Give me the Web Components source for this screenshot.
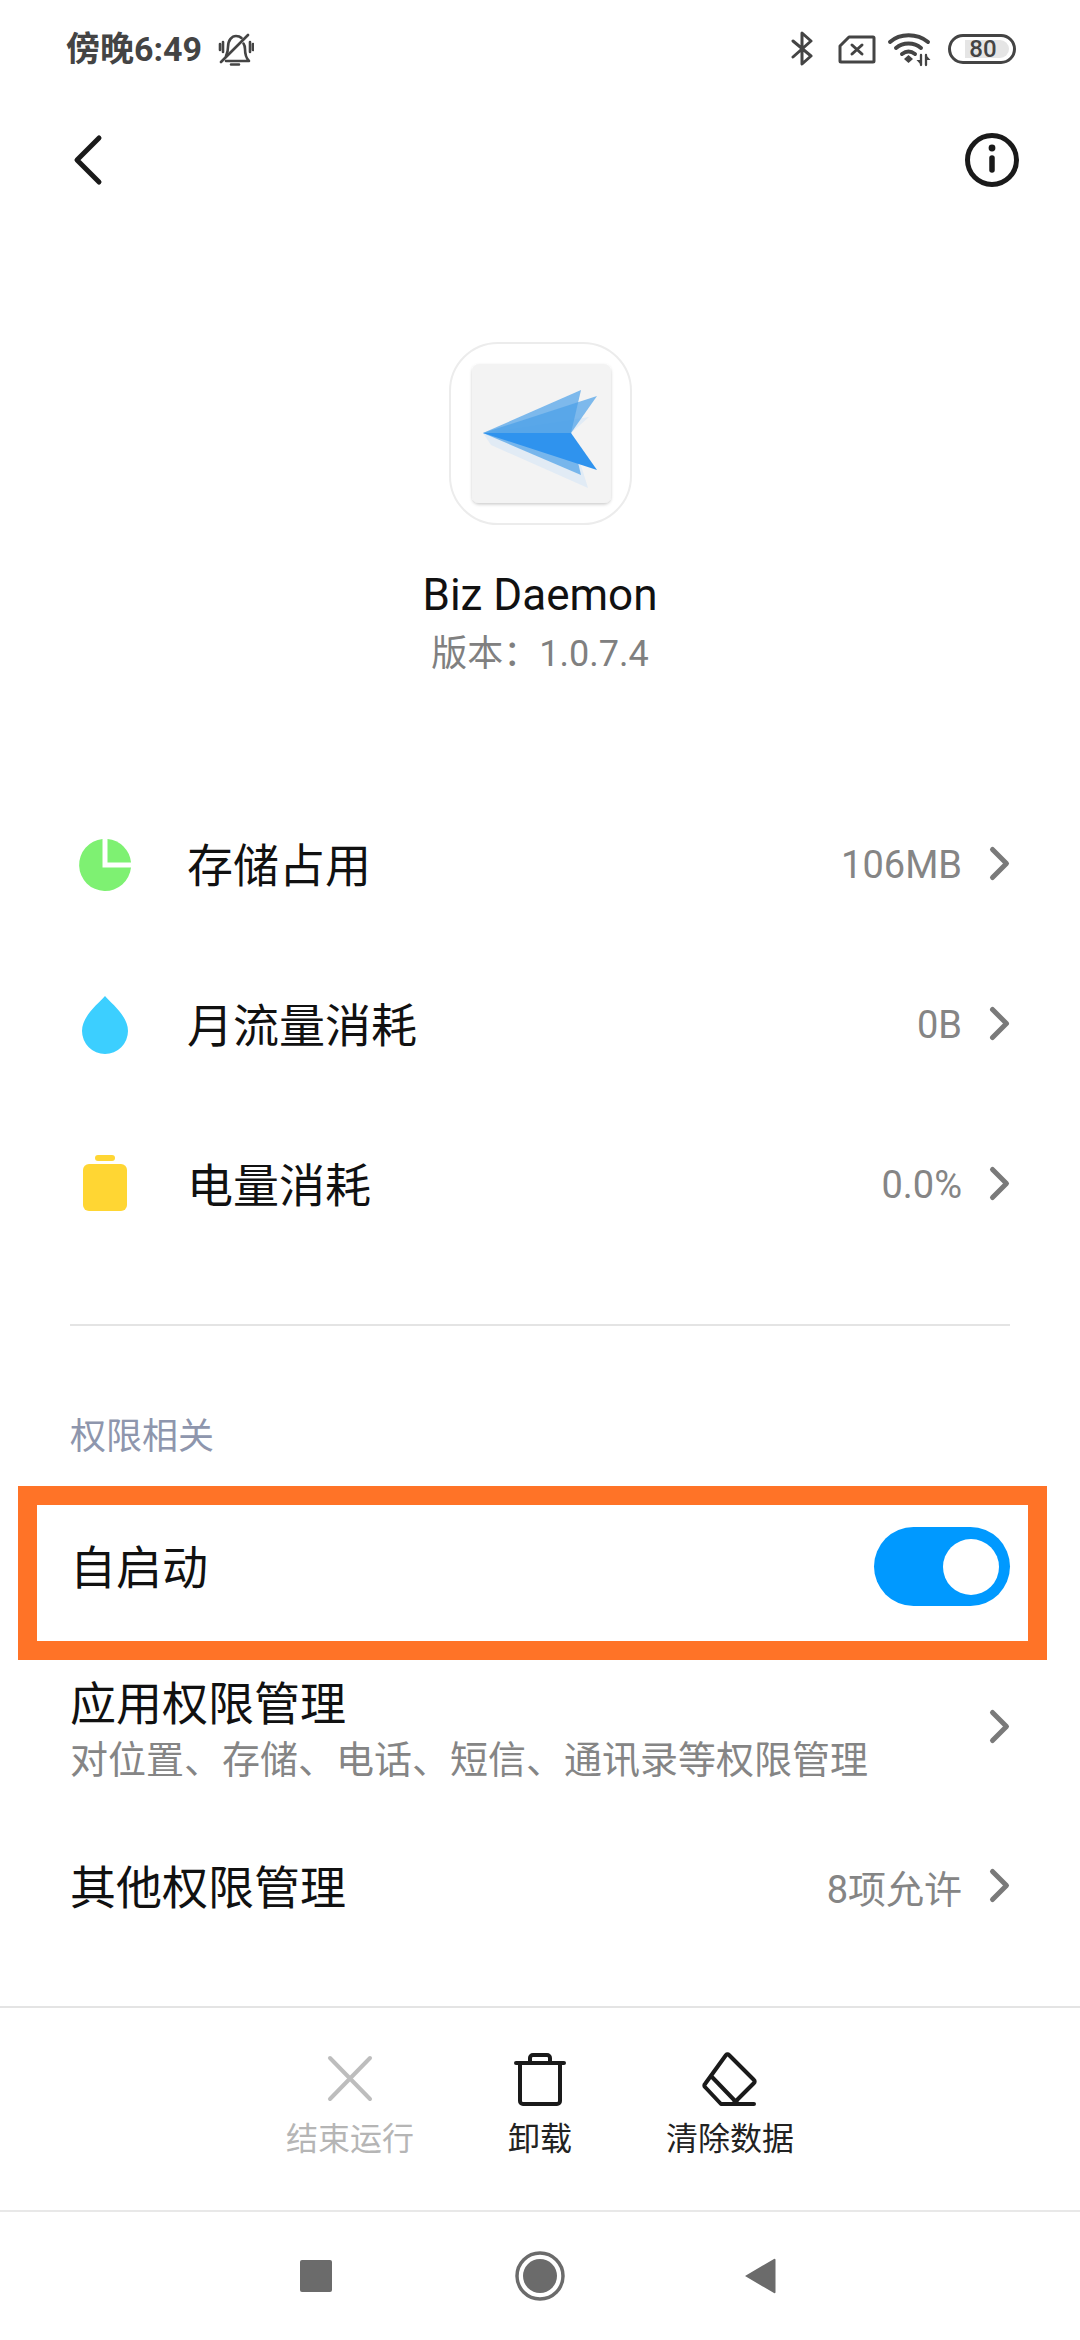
<!DOCTYPE html>
<html lang="zh">
<head>
<meta charset="utf-8">
<title>Biz Daemon</title>
<style>
html, body { margin: 0; padding: 0; background: #fff; }
body { font-family: Roboto, "Noto Sans CJK SC", sans-serif; }
</style>
</head>
<body>
<app-page>
  <status-bar slot="top"></status-bar>
  <top-bar slot="top"></top-bar>
  <app-head slot="top" name="Biz Daemon" version="版本：1.0.7.4"></app-head>

  <stat-row slot="top" label="存储占用" value="106MB" style="margin-top:106px">
    <svg slot="icon" width="60" height="60" viewBox="0 0 60 60"><path d="M27.5 4.100A26 26 0 1 0 56 32.500H27.500z" fill="#7ef172"/><path d="M32.500 4.100A26 26 0 0 1 56 27.500H32.500z" fill="#7ef172"/></svg>
  </stat-row>
  <stat-row slot="top" label="月流量消耗" value="0B">
    <svg slot="icon" width="60" height="60" viewBox="0 0 60 60"><path d="M30 1C36 8 53 21 53 36A23 23 0 0 1 7 36C7 21 24 8 30 1z" fill="#3ccfff"/></svg>
  </stat-row>
  <stat-row slot="top" label="电量消耗" value="0.0%">
    <svg slot="icon" width="60" height="60" viewBox="0 0 60 60"><rect x="20" y="0" width="20" height="6" rx="3" fill="#ffd633"/><rect x="8" y="9" width="44" height="47" rx="6" fill="#ffd633"/></svg>
  </stat-row>

  <section-label slot="top">权限相关</section-label>
  <toggle-row slot="top" label="自启动"></toggle-row>
  <perm-row slot="top" label="应用权限管理" sub="对位置、存储、电话、短信、通讯录等权限管理"></perm-row>
  <perm-row slot="top" label="其他权限管理" value="8项允许" tall></perm-row>

  <action-bar slot="bottom">
    <action-item label="结束运行" disabled>
      <svg slot="icon" width="60" height="60" viewBox="0 0 60 60" fill="none" stroke="#bdbdbd" stroke-width="4" stroke-linecap="round"><path d="M10 9L50 50M50 9L10 50"/></svg>
    </action-item>
    <action-item label="卸载">
      <svg slot="icon" width="60" height="60" viewBox="0 0 60 60" fill="none" stroke="#1a1a1a" stroke-width="4" stroke-linecap="round" stroke-linejoin="round"><path d="M6 14H54M10 14V52a3 3 0 0 0 3 3H47a3 3 0 0 0 3-3V14M20 14V9a3 3 0 0 1 3-3H37a3 3 0 0 1 3 3V14"/></svg>
    </action-item>
    <action-item label="清除数据">
      <svg slot="icon" width="60" height="60" viewBox="0 0 60 60" fill="none" stroke="#1a1a1a" stroke-width="4" stroke-linecap="round" stroke-linejoin="round"><path d="M29 6L54 31a2 2 0 0 1 0 3L33 55H21L5 38a2 2 0 0 1 0-3L26 6a2 2 0 0 1 3 0zM12 28L38 55M33 55H54"/></svg>
    </action-item>
  </action-bar>
  <nav-bar slot="bottom"></nav-bar>
</app-page>

<script>
(function() {
  const CJK = 'Roboto, "Noto Sans CJK SC", sans-serif';

  class AppPage extends HTMLElement {
    constructor() {
      super();
      this.attachShadow({mode: 'open'}).innerHTML = `
<style>
:host { display: flex; flex-direction: column; justify-content: space-between; width: 1080px; height: 2340px; overflow: hidden; background: #fff; font-family: ${CJK}; }
.top, .bottom { display: block; }
</style>
<div class="top"><slot name="top"></slot></div>
<div class="bottom"><slot name="bottom"></slot></div>`;
    }
  }

  class StatusBar extends HTMLElement {
    constructor() {
      super();
      this.attachShadow({mode: 'open'}).innerHTML = `
<style>
:host { display: flex; align-items: center; height: 98px; padding: 0 64px 0 66px; color: #444; }
.time { font-size: 34px; font-weight: 700; line-height: 98px; }
.bell { margin-left: 16px; }
.right { margin-left: auto; display: flex; align-items: center; }
.batt { position: relative; width: 68px; height: 30px; margin-left: 15px; box-sizing: border-box; border: 3px solid #444; border-radius: 15px; }
.lvl { position: absolute; left: 14px; top: 3px; width: 44px; height: 18px; background: #e5e5e5; border-radius: 0 9px 9px 0; }
.num { position: absolute; left: 14px; top: 0; width: 36px; text-align: center; font-size: 24px; font-weight: 500; line-height: 24px; }
</style>
<span class="time">傍晚6:49</span>
<svg class="bell" width="36" height="36" viewBox="0 0 36 36" fill="none" stroke="#444" stroke-width="2.600" stroke-linecap="round" stroke-linejoin="round">
  <path d="M8 30H31C28 27 27 23 27 18C27 16 26.500 14 25.500 12.500M8 25C9.500 22 10 19 10 16C10 9 14 5 18 5C20 5 22 5.500 23.500 7"/>
  <path d="M3 31L30 4M13 33.500H21M2 13V19M5 11V21M32 11V21M35 13V19"/>
</svg>
<div class="right">
  <svg width="24" height="36" viewBox="0 0 24 36" fill="none" stroke="#444" stroke-width="3" stroke-linecap="round" stroke-linejoin="round"><path d="M2 10L20 25L11 33V2L20 10L2 26"/></svg>
  <svg style="margin-left:23px" width="38" height="30" viewBox="0 0 38 30" fill="none" stroke="#444" stroke-width="3" stroke-linecap="round" stroke-linejoin="round"><path d="M11 3H35a1 1 0 0 1 1 1V27a1 1 0 0 1-1 1H3a1 1 0 0 1-1-1V12zM14 11L24 20M24 11L14 20"/></svg>
  <svg style="margin-left:11px" width="46" height="36" viewBox="0 0 46 36" fill="none" stroke="#444" stroke-linecap="round">
    <path stroke-width="4" d="M3 11C13 2 30 2 41 11M9 17C16 11 27 11 34 17M15 23C19 20 24 20 28 23"/>
    <path fill="#444" stroke="none" d="M21.500 24L26 28L21.500 32L17 28z"/>
    <path stroke-width="2.300" fill="none" d="M34 24V34M39 24V34"/>
    <path fill="#444" stroke="none" d="M34 34L29.500 29H34zM39 24L43.500 29H39z"/>
  </svg>
  <div class="batt"><div class="lvl"></div><div class="num">80</div></div>
</div>`;
    }
  }

  class TopBar extends HTMLElement {
    constructor() {
      super();
      this.attachShadow({mode: 'open'}).innerHTML = `
<style>
:host { display: flex; align-items: center; justify-content: space-between; height: 124px; padding: 0 58px 0 72px; }
</style>
<svg width="32" height="52" viewBox="0 0 32 52" fill="none" stroke="#1a1a1a" stroke-width="5" stroke-linecap="round" stroke-linejoin="round"><path d="M27 4L5 26L27 48"/></svg>
<svg width="60" height="60" viewBox="0 0 60 60" fill="none" stroke="#1a1a1a" stroke-linecap="round"><circle cx="30" cy="30" r="24.500" stroke-width="5"/><circle cx="30" cy="18" r="3.400" fill="#1a1a1a" stroke="none"/><path d="M30 28V40" stroke-width="5.500"/></svg>`;
    }
  }

  class AppHead extends HTMLElement {
    constructor() {
      super();
      this.attachShadow({mode: 'open'}).innerHTML = `
<style>
:host { display: flex; flex-direction: column; align-items: center; padding-top: 120px; }
svg { display: block; }
.name { margin-top: 40px; font-size: 44px; line-height: 60px; color: #111; }
.ver { margin-top: 4px; font-size: 36px; line-height: 50px; color: #808080; }
</style>
<svg width="183" height="183" viewBox="0 0 183 183">
  <defs><filter id="s" x="-10%" y="-10%" width="120%" height="120%"><feDropShadow dx="0" dy="1.500" stdDeviation="1.500" flood-color="#000" flood-opacity=".2"/></filter></defs>
  <rect x="1" y="1" width="181" height="181" rx="48" fill="#fff" stroke="#ececec" stroke-width="2"/>
  <rect x="23" y="22" width="139" height="139" rx="7" fill="#f3f3f3" filter="url(#s)"/>
  <path d="M42 103L139 146L122 91L140 75L34 91z" fill="#e1ebf5"/>
  <path d="M34 91L132 48L122 91z" fill="#4a9fe8" fill-opacity=".7"/>
  <path d="M34 91L148 54L122 91z" fill="#4a9fe8" fill-opacity=".7"/>
  <path d="M34 91L132 133L122 91z" fill="#4a9fe8" fill-opacity=".7"/>
  <path d="M34 91L122 91L148 128z" fill="#2f93ee"/>
</svg>
<div class="name">${this.getAttribute('name')}</div>
<div class="ver">${this.getAttribute('version')}</div>`;
    }
  }

  const CHEVRON = `<svg class="chev" width="24" height="40" viewBox="0 0 24 40" fill="none" stroke="#7a7a7a" stroke-width="5" stroke-linecap="round" stroke-linejoin="round"><path d="M4.500 4.500L18.500 18.500L4.500 32.500"/></svg>`;

  class StatRow extends HTMLElement {
    constructor() {
      super();
      this.attachShadow({mode: 'open'}).innerHTML = `
<style>
:host { display: flex; align-items: center; height: 160px; padding: 0 68px 0 75px; }
::slotted(svg) { display: block; }
.icon { width: 60px; margin-right: 52px; }
.label { font-size: 46px; color: #111; padding-bottom: 6px; }
.value { margin-left: auto; margin-right: 26px; font-size: 38px; color: #858585; }
</style>
<div class="icon"><slot name="icon"></slot></div>
<span class="label">${this.getAttribute('label')}</span>
<span class="value">${this.getAttribute('value')}</span>
${CHEVRON}`;
    }
  }

  class SectionLabel extends HTMLElement {
    constructor() {
      super();
      this.attachShadow({mode: 'open'}).innerHTML = `
<style>
:host { display: block; margin: 59px 70px 24px; padding-top: 86px; border-top: 2px solid #e4e4e4; font-size: 36px; line-height: 50px; color: #8e96ad; }
</style>
<slot></slot>`;
    }
  }

  class ToggleRow extends HTMLElement {
    constructor() {
      super();
      this.attachShadow({mode: 'open'}).innerHTML = `
<style>
:host { display: flex; align-items: center; justify-content: space-between; box-sizing: border-box; height: 174px; margin: 0 33px 0 18px; padding: 0 18px 13px 33px; border: 19px solid #ff7327; }
.label { font-size: 46px; color: #111; padding-bottom: 6px; }
.sw { position: relative; width: 136px; height: 79px; border-radius: 40px; background: #0099ff; }
.knob { position: absolute; right: 11px; top: 12px; width: 56px; height: 56px; border-radius: 50%; background: #fff; }
</style>
<span class="label">${this.getAttribute('label')}</span>
<div class="sw"><div class="knob"></div></div>`;
    }
  }

  class PermRow extends HTMLElement {
    constructor() {
      super();
      const sub = this.getAttribute('sub');
      const value = this.getAttribute('value');
      this.attachShadow({mode: 'open'}).innerHTML = `
<style>
:host { display: flex; align-items: center; height: ${this.hasAttribute('tall') ? 180 : 138}px; padding: 0 68px 0 70px; }
.txt { margin-right: auto; }
.label { font-size: 46px; line-height: 60px; color: #111; }
.sub { margin-top: 1px; font-size: 38px; line-height: 50px; color: #858585; }
.value { margin-right: 26px; font-size: 38px; color: #858585; padding-bottom: 4px; }
.chev { margin-bottom: 2px; }
</style>
<div class="txt"><div class="label">${this.getAttribute('label')}</div>${sub ? `<div class="sub">${sub}</div>` : ''}</div>
${value ? `<span class="value">${value}</span>` : ''}
${CHEVRON}`;
    }
  }

  class ActionBar extends HTMLElement {
    constructor() {
      super();
      this.attachShadow({mode: 'open'}).innerHTML = `
<style>
:host { display: flex; justify-content: center; box-sizing: border-box; height: 206px; padding-top: 41px; border-top: 2px solid #e4e4e4; border-bottom: 2px solid #e8e8e8; }
</style>
<slot></slot>`;
    }
  }

  class ActionItem extends HTMLElement {
    constructor() {
      super();
      this.attachShadow({mode: 'open'}).innerHTML = `
<style>
:host { display: flex; flex-direction: column; align-items: center; width: 190px; font-size: 32px; line-height: 44px; color: ${this.hasAttribute('disabled') ? '#b5b5b5' : '#222'}; }
::slotted(svg) { display: block; }
.t { margin-top: 8px; }
</style>
<slot name="icon"></slot>
<div class="t">${this.getAttribute('label')}</div>`;
    }
  }

  class NavBar extends HTMLElement {
    constructor() {
      super();
      this.attachShadow({mode: 'open'}).innerHTML = `
<style>
:host { display: flex; justify-content: center; align-items: center; height: 128px; padding-right: 3px; }
.sq { width: 32px; height: 32px; margin-right: 183px; border-radius: 2px; background: #6b6b6b; }
svg { display: block; }
.home { margin-right: 178px; }
</style>
<div class="sq"></div>
<svg class="home" width="50" height="50" viewBox="0 0 50 50"><circle cx="25" cy="25" r="23" fill="none" stroke="#6b6b6b" stroke-width="3.500"/><circle cx="25" cy="25" r="17" fill="#6b6b6b"/></svg>
<svg width="34" height="38" viewBox="0 0 34 38"><path d="M2 19L31 2a1 1 0 0 1 1.500 1V35a1 1 0 0 1-1.500 1z" fill="#6b6b6b"/></svg>`;
    }
  }

  customElements.define('app-page', AppPage);
  customElements.define('status-bar', StatusBar);
  customElements.define('top-bar', TopBar);
  customElements.define('app-head', AppHead);
  customElements.define('stat-row', StatRow);
  customElements.define('section-label', SectionLabel);
  customElements.define('toggle-row', ToggleRow);
  customElements.define('perm-row', PermRow);
  customElements.define('action-bar', ActionBar);
  customElements.define('action-item', ActionItem);
  customElements.define('nav-bar', NavBar);
})();
</script>
</body>
</html>
